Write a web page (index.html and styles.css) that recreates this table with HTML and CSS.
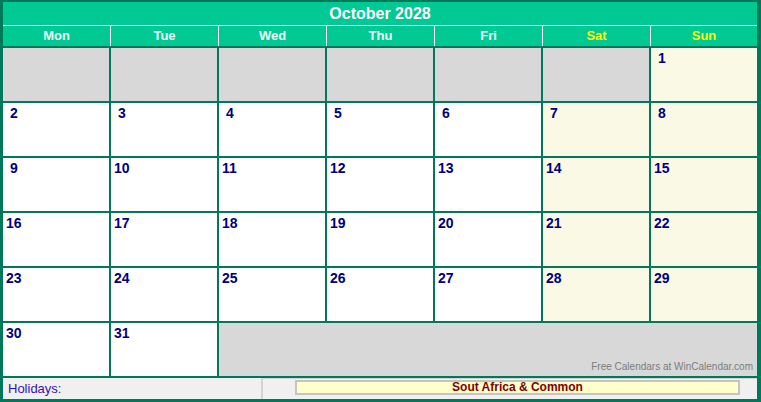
FILE: index.html
```html
<!DOCTYPE html>
<html>
<head>
<meta charset="utf-8">
<title>October 2028</title>
<link rel="stylesheet" href="styles.css">
</head>
<body>
<div class="cal">
  <div class="title">October 2028</div>
  <div class="days">
    <div class="dn">Mon</div><div class="dn">Tue</div><div class="dn">Wed</div><div class="dn">Thu</div><div class="dn">Fri</div><div class="dn we">Sat</div><div class="dn we">Sun</div>
  </div>
  <div class="grid">
    <div class="c empty"></div><div class="c empty"></div><div class="c empty"></div><div class="c empty"></div><div class="c empty"></div><div class="c empty"></div><div class="c wk"><span class="n one">1</span></div>
    <div class="c"><span class="n one">2</span></div><div class="c"><span class="n one">3</span></div><div class="c"><span class="n one">4</span></div><div class="c"><span class="n one">5</span></div><div class="c"><span class="n one">6</span></div><div class="c wk"><span class="n one">7</span></div><div class="c wk"><span class="n one">8</span></div>
    <div class="c"><span class="n one">9</span></div><div class="c"><span class="n">10</span></div><div class="c"><span class="n">11</span></div><div class="c"><span class="n">12</span></div><div class="c"><span class="n">13</span></div><div class="c wk"><span class="n">14</span></div><div class="c wk"><span class="n">15</span></div>
    <div class="c"><span class="n">16</span></div><div class="c"><span class="n">17</span></div><div class="c"><span class="n">18</span></div><div class="c"><span class="n">19</span></div><div class="c"><span class="n">20</span></div><div class="c wk"><span class="n">21</span></div><div class="c wk"><span class="n">22</span></div>
    <div class="c"><span class="n">23</span></div><div class="c"><span class="n">24</span></div><div class="c"><span class="n">25</span></div><div class="c"><span class="n">26</span></div><div class="c"><span class="n">27</span></div><div class="c wk"><span class="n">28</span></div><div class="c wk"><span class="n">29</span></div>
    <div class="c"><span class="n">30</span></div><div class="c"><span class="n">31</span></div>
    <div class="c empty span5"><span class="credit">Free Calendars at WinCalendar.com</span></div>
  </div>
  <div class="foot">
    <div class="hl">Holidays:</div>
    <div class="hbox"><div class="tag">Sout Africa &amp; Common</div></div>
  </div>
</div>
</body>
</html>
```

FILE: styles.css
```css
html, body {
  margin: 0;
  padding: 0;
  background: #ffffff;
}

.cal {
  width: 761px;
  height: 402px;
  box-sizing: border-box;
  background: #00785a;
  padding: 2px 4px 3px 3px;
  display: flex;
  flex-direction: column;
  font-family: "Liberation Sans", Arial, sans-serif;
}

.title {
  height: 23px;
  line-height: 23px;
  background: #00c994;
  border-bottom: 1px solid #ffffff;
  color: #ffffff;
  font-size: 16px;
  font-weight: bold;
  text-align: center;
}

.days {
  height: 20px;
  display: grid;
  grid-template-columns: repeat(6, 107px) 106px;
  column-gap: 1px;
  background: #ffffff;
  margin-bottom: 2px;
}

.dn {
  background: #00c994;
  color: #eafff4;
  font-size: 13px;
  font-weight: bold;
  line-height: 20px;
  text-align: center;
}

.dn.we {
  color: #ffff00;
}

.grid {
  display: grid;
  grid-template-columns: repeat(7, 106px);
  grid-template-rows: repeat(6, 53px);
  column-gap: 2px;
  row-gap: 2px;
  margin-bottom: 2px;
}

.c {
  background: #ffffff;
  padding: 1px 0 0 3px;
}

.c.wk {
  background: #faf9e6;
}

.c.empty {
  background: #d8d8d8;
}

.c.span5 {
  grid-column: span 5;
  display: flex;
  justify-content: flex-end;
  align-items: flex-end;
  padding: 0 4px 2px 0;
}

.n {
  color: #000080;
  font-size: 14px;
  font-weight: bold;
  line-height: 16px;
}

.n.one {
  padding-left: 4px;
}

.credit {
  color: #7c7c7c;
  font-size: 10px;
  line-height: 14px;
}

.foot {
  flex: 1;
  background: #f0f0f0;
  display: flex;
}

.hl {
  width: 253px;
  padding-left: 5px;
  color: #3311bb;
  font-size: 13px;
  line-height: 21px;
}

.hbox {
  flex: 1;
  border-left: 2px solid #d4d4d4;
  border-top: 1px solid #d4d4d4;
  padding: 1px 0 0 32px;
}

.tag {
  width: 441px;
  height: 11px;
  background: #ffffcc;
  border: 2px solid #c4c4c4;
  color: #800000;
  font-size: 12px;
  font-weight: bold;
  line-height: 11px;
  text-align: center;
}
```
